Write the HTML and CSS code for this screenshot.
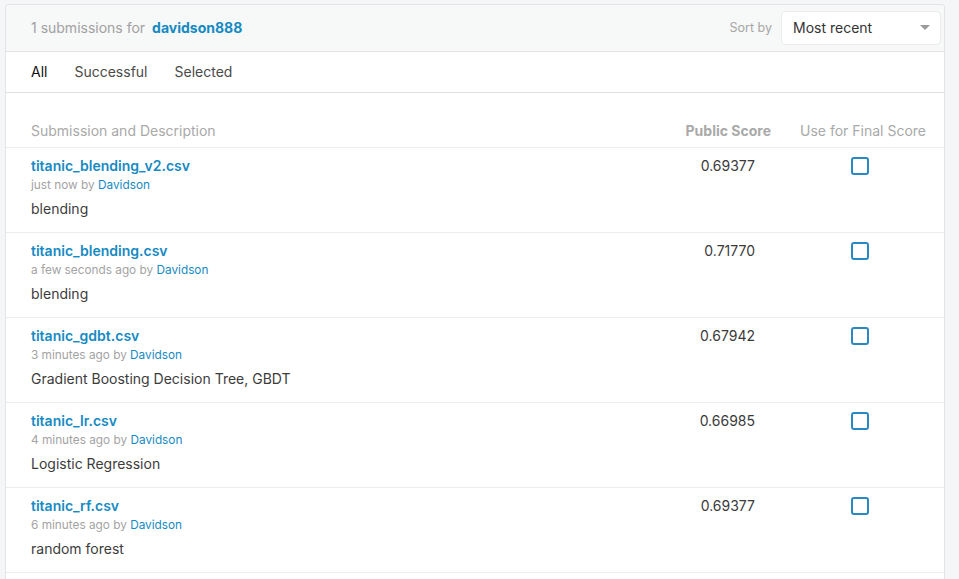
FILE: index.html
```html
<!DOCTYPE html>
<html>
<head>
<meta charset="utf-8">
<link rel="stylesheet" href="styles.css">
</head>
<body>
<div class="card">
  <div class="card-header">
    <div class="title"><span class="muted">1 submissions for</span> <a class="user">davidson888</a></div>
    <div class="sort">
      <span class="sort-label">Sort by</span>
      <div class="select"><span>Most recent</span><span class="caret"></span></div>
    </div>
  </div>
  <div class="tabs">
    <span class="tab active">All</span>
    <span class="tab">Successful</span>
    <span class="tab">Selected</span>
  </div>
  <div class="table">
    <div class="thead">
      <div class="c-desc">Submission and Description</div>
      <div class="c-score strong">Public Score</div>
      <div class="c-final">Use for Final Score</div>
    </div>
    <div class="row">
      <div class="c-desc">
        <div class="file">titanic_blending_v2.csv</div>
        <div class="meta">just now by <a class="by">Davidson</a></div>
        <div class="desc">blending</div>
      </div>
      <div class="c-score">0.69377</div>
      <div class="c-final"><span class="check"></span></div>
    </div>
    <div class="row">
      <div class="c-desc">
        <div class="file">titanic_blending.csv</div>
        <div class="meta">a few seconds ago by <a class="by">Davidson</a></div>
        <div class="desc">blending</div>
      </div>
      <div class="c-score">0.71770</div>
      <div class="c-final"><span class="check"></span></div>
    </div>
    <div class="row">
      <div class="c-desc">
        <div class="file">titanic_gdbt.csv</div>
        <div class="meta">3 minutes ago by <a class="by">Davidson</a></div>
        <div class="desc">Gradient Boosting Decision Tree, GBDT</div>
      </div>
      <div class="c-score">0.67942</div>
      <div class="c-final"><span class="check"></span></div>
    </div>
    <div class="row">
      <div class="c-desc">
        <div class="file">titanic_lr.csv</div>
        <div class="meta">4 minutes ago by <a class="by">Davidson</a></div>
        <div class="desc">Logistic Regression</div>
      </div>
      <div class="c-score">0.66985</div>
      <div class="c-final"><span class="check"></span></div>
    </div>
    <div class="row">
      <div class="c-desc">
        <div class="file">titanic_rf.csv</div>
        <div class="meta">6 minutes ago by <a class="by">Davidson</a></div>
        <div class="desc">random forest</div>
      </div>
      <div class="c-score">0.69377</div>
      <div class="c-final"><span class="check"></span></div>
    </div>
  </div>
</div>
</body>
</html>
```
FILE: styles.css
```css
html, body {
  margin: 0;
  background: #f4f6f7;
}
body {
  padding: 4px 0 0 5px;
  font-family: Inter, "Liberation Sans", sans-serif;
  font-size: 14px;
  color: #3c3c3c;
}
.card {
  width: 940px;
  box-sizing: border-box;
  background: #fff;
  border: 1px solid #e2e4e6;
  border-bottom: none;
  border-radius: 4px 4px 0 0;
  min-height: 580px;
}
.card-header {
  height: 46px;
  display: flex;
  align-items: center;
  justify-content: space-between;
  background: #f7f8f8;
  border-bottom: 1px solid #e4e4e4;
  border-radius: 4px 4px 0 0;
  padding: 0 3px 0 25px;
}
.title {
  font-size: 14px;
  padding-bottom: 2px;
}
.muted {
  color: #a1a1a1;
}
.user {
  color: #168ac2;
  font-weight: 700;
  margin-left: 3px;
}
.sort {
  display: flex;
  align-items: center;
}
.sort-label {
  color: #a6a6a6;
  font-size: 12.5px;
  margin-right: 9px;
  padding-bottom: 1px;
}
.select {
  width: 160px;
  height: 34px;
  box-sizing: border-box;
  background: #fff;
  border: 1px solid #ebebeb;
  border-radius: 4px;
  display: flex;
  align-items: center;
  justify-content: space-between;
  padding: 0 10px 1px 11px;
  color: #333;
  font-size: 14px;
}
.caret {
  width: 0;
  height: 0;
  border-left: 5px solid transparent;
  border-right: 5px solid transparent;
  border-top: 5px solid #9a9a9a;
}
.tabs {
  display: flex;
  align-items: center;
  gap: 27px;
  padding-left: 25px;
  padding-bottom: 2px;
  box-sizing: border-box;
  height: 41px;
  border-bottom: 1px solid #e0e0e0;
}
.tab {
  color: #4a4a4a;
}
.tab.active {
  color: #111;
}
.table {
  padding-top: 29px;
}
.thead {
  display: flex;
  height: 25px;
  align-items: flex-start;
  color: #a9a9a9;
  border-bottom: 1px solid #ececec;
}
.strong {
  font-weight: 700;
}
.c-desc {
  flex: 1;
  padding-left: 25px;
}
.c-score {
  width: 150px;
  text-align: right;
}
.c-final {
  width: 126px;
  padding-left: 29px;
  padding-right: 18px;
  text-align: right;
}
.row {
  display: flex;
  height: 85px;
  border-bottom: 1px solid #ececec;
  padding-top: 9px;
  box-sizing: border-box;
}
.row .c-score {
  color: #3a3a3a;
  padding-right: 16px;
  box-sizing: content-box;
  width: 134px;
}
.row .c-final {
  text-align: left;
}
.file {
  color: #168ac2;
  font-weight: 600;
  line-height: 17px;
}
.meta {
  font-size: 11.8px;
  color: #a3a3a3;
  line-height: 16px;
  margin-top: 3px;
}
.by {
  color: #168ac2;
}
.desc {
  margin-top: 7px;
  color: #3c3c3c;
}
.c-final .check {
  display: inline-block;
  margin-left: 51px;
  width: 18px;
  height: 18px;
  box-sizing: border-box;
  border: 2px solid #2a88c0;
  border-radius: 3px;
}
```
